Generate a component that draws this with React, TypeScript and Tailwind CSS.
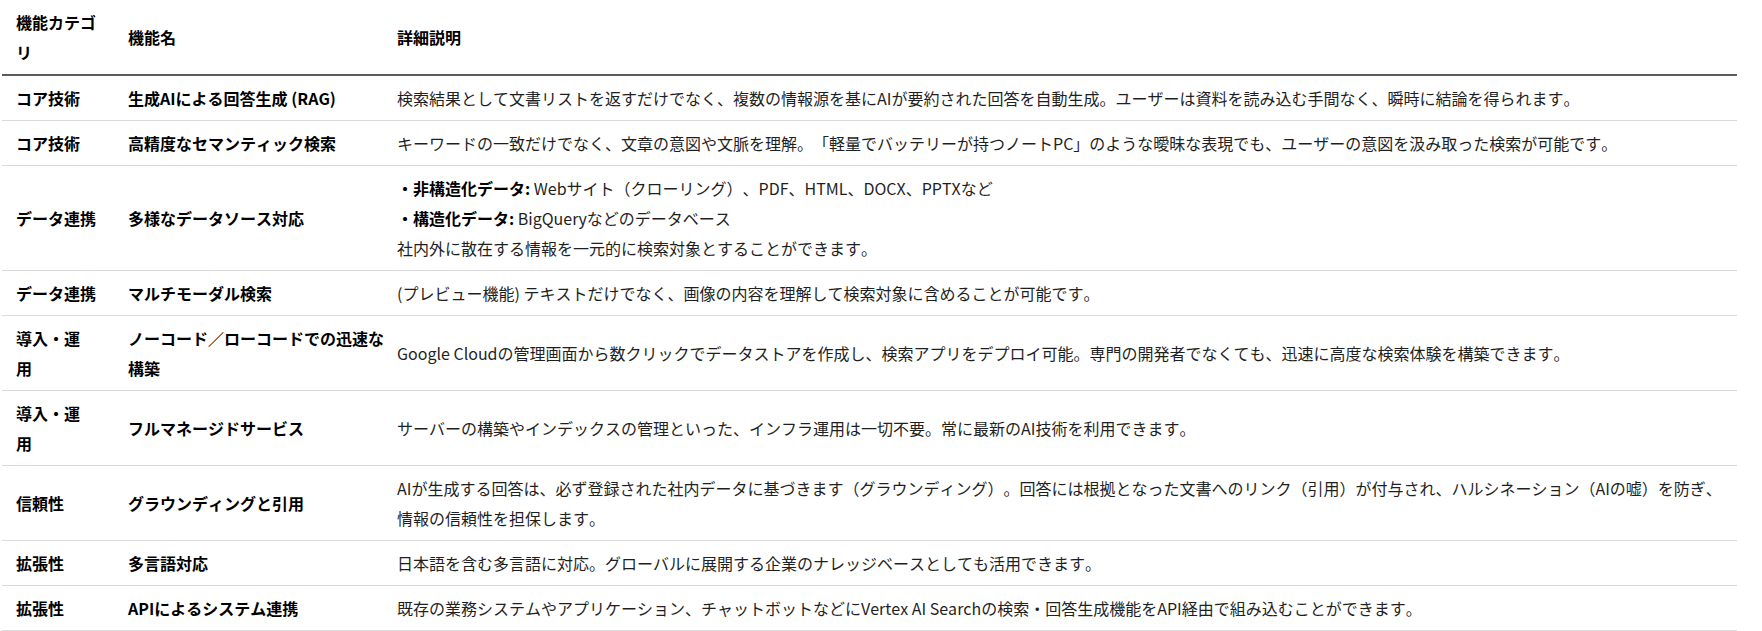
import React from "react";

type Row = {
  category: React.ReactNode;
  name: React.ReactNode;
  detail: React.ReactNode;
};

const rows: Row[] = [
  {
    category: "コア技術",
    name: "生成AIによる回答生成 (RAG)",
    detail:
      "検索結果として文書リストを返すだけでなく、複数の情報源を基にAIが要約された回答を自動生成。ユーザーは資料を読み込む手間なく、瞬時に結論を得られます。",
  },
  {
    category: "コア技術",
    name: "高精度なセマンティック検索",
    detail:
      "キーワードの一致だけでなく、文章の意図や文脈を理解。「軽量でバッテリーが持つノートPC」のような曖昧な表現でも、ユーザーの意図を汲み取った検索が可能です。",
  },
  {
    category: "データ連携",
    name: "多様なデータソース対応",
    detail: (
      <>
        <b className="font-bold text-black">・非構造化データ:</b> Webサイト（クローリング）、PDF、HTML、DOCX、PPTXなど
        <br />
        <b className="font-bold text-black">・構造化データ:</b> BigQueryなどのデータベース
        <br />
        社内外に散在する情報を一元的に検索対象とすることができます。
      </>
    ),
  },
  {
    category: "データ連携",
    name: "マルチモーダル検索",
    detail: "(プレビュー機能) テキストだけでなく、画像の内容を理解して検索対象に含めることが可能です。",
  },
  {
    category: (
      <>
        導入・運
        <br />用
      </>
    ),
    name: (
      <>
        ノーコード／ローコードでの迅速な
        <br />
        構築
      </>
    ),
    detail:
      "Google Cloudの管理画面から数クリックでデータストアを作成し、検索アプリをデプロイ可能。専門の開発者でなくても、迅速に高度な検索体験を構築できます。",
  },
  {
    category: (
      <>
        導入・運
        <br />用
      </>
    ),
    name: "フルマネージドサービス",
    detail: "サーバーの構築やインデックスの管理といった、インフラ運用は一切不要。常に最新のAI技術を利用できます。",
  },
  {
    category: "信頼性",
    name: "グラウンディングと引用",
    detail: (
      <>
        AIが生成する回答は、必ず登録された社内データに基づきます（グラウンディング）。回答には根拠となった文書へのリンク（引用）が付与され、ハルシネーション（AIの嘘）を防ぎ、
        <br />
        情報の信頼性を担保します。
      </>
    ),
  },
  {
    category: "拡張性",
    name: "多言語対応",
    detail: "日本語を含む多言語に対応。グローバルに展開する企業のナレッジベースとしても活用できます。",
  },
  {
    category: "拡張性",
    name: "APIによるシステム連携",
    detail:
      "既存の業務システムやアプリケーション、チャットボットなどにVertex AI Searchの検索・回答生成機能をAPI経由で組み込むことができます。",
  },
];

const App = () => {
  return (
    <div className="w-[1762px] h-[631px] overflow-hidden bg-white pl-[2px] font-['Noto_Sans_CJK_JP','Noto_Sans',sans-serif] text-[16px] leading-[30px] text-[#1f1f1f] [text-spacing-trim:space-all] [font-kerning:none]">
      <table className="w-[1735px] table-fixed border-collapse text-left">
        <colgroup>
          <col className="w-[112px]" />
          <col className="w-[269px]" />
          <col />
        </colgroup>

        {/* Header */}
        <thead>
          <tr>
            <th className="px-[14px] py-[7px] align-middle font-bold text-black border-b-2 border-[#5c5c5c]">
              機能カテゴ
              <br />リ
            </th>
            <th className="px-[14px] py-[7px] align-middle font-bold text-black border-b-2 border-[#5c5c5c]">機能名</th>
            <th className="px-[14px] py-[7px] align-middle font-bold text-black border-b-2 border-[#5c5c5c]">詳細説明</th>
          </tr>
        </thead>

        {/* Rows */}
        <tbody>
          {rows.map((row, i) => (
            <tr key={i}>
              <td className="px-[14px] py-[7px] align-middle font-bold text-black whitespace-nowrap border-b border-[#dadada]">
                {row.category}
              </td>
              <td className="px-[14px] py-[7px] align-middle font-bold text-black whitespace-nowrap border-b border-[#dadada]">
                {row.name}
              </td>
              <td className="px-[14px] py-[7px] align-middle whitespace-nowrap border-b border-[#dadada]">{row.detail}</td>
            </tr>
          ))}
        </tbody>
      </table>
    </div>
  );
};

export default App;
